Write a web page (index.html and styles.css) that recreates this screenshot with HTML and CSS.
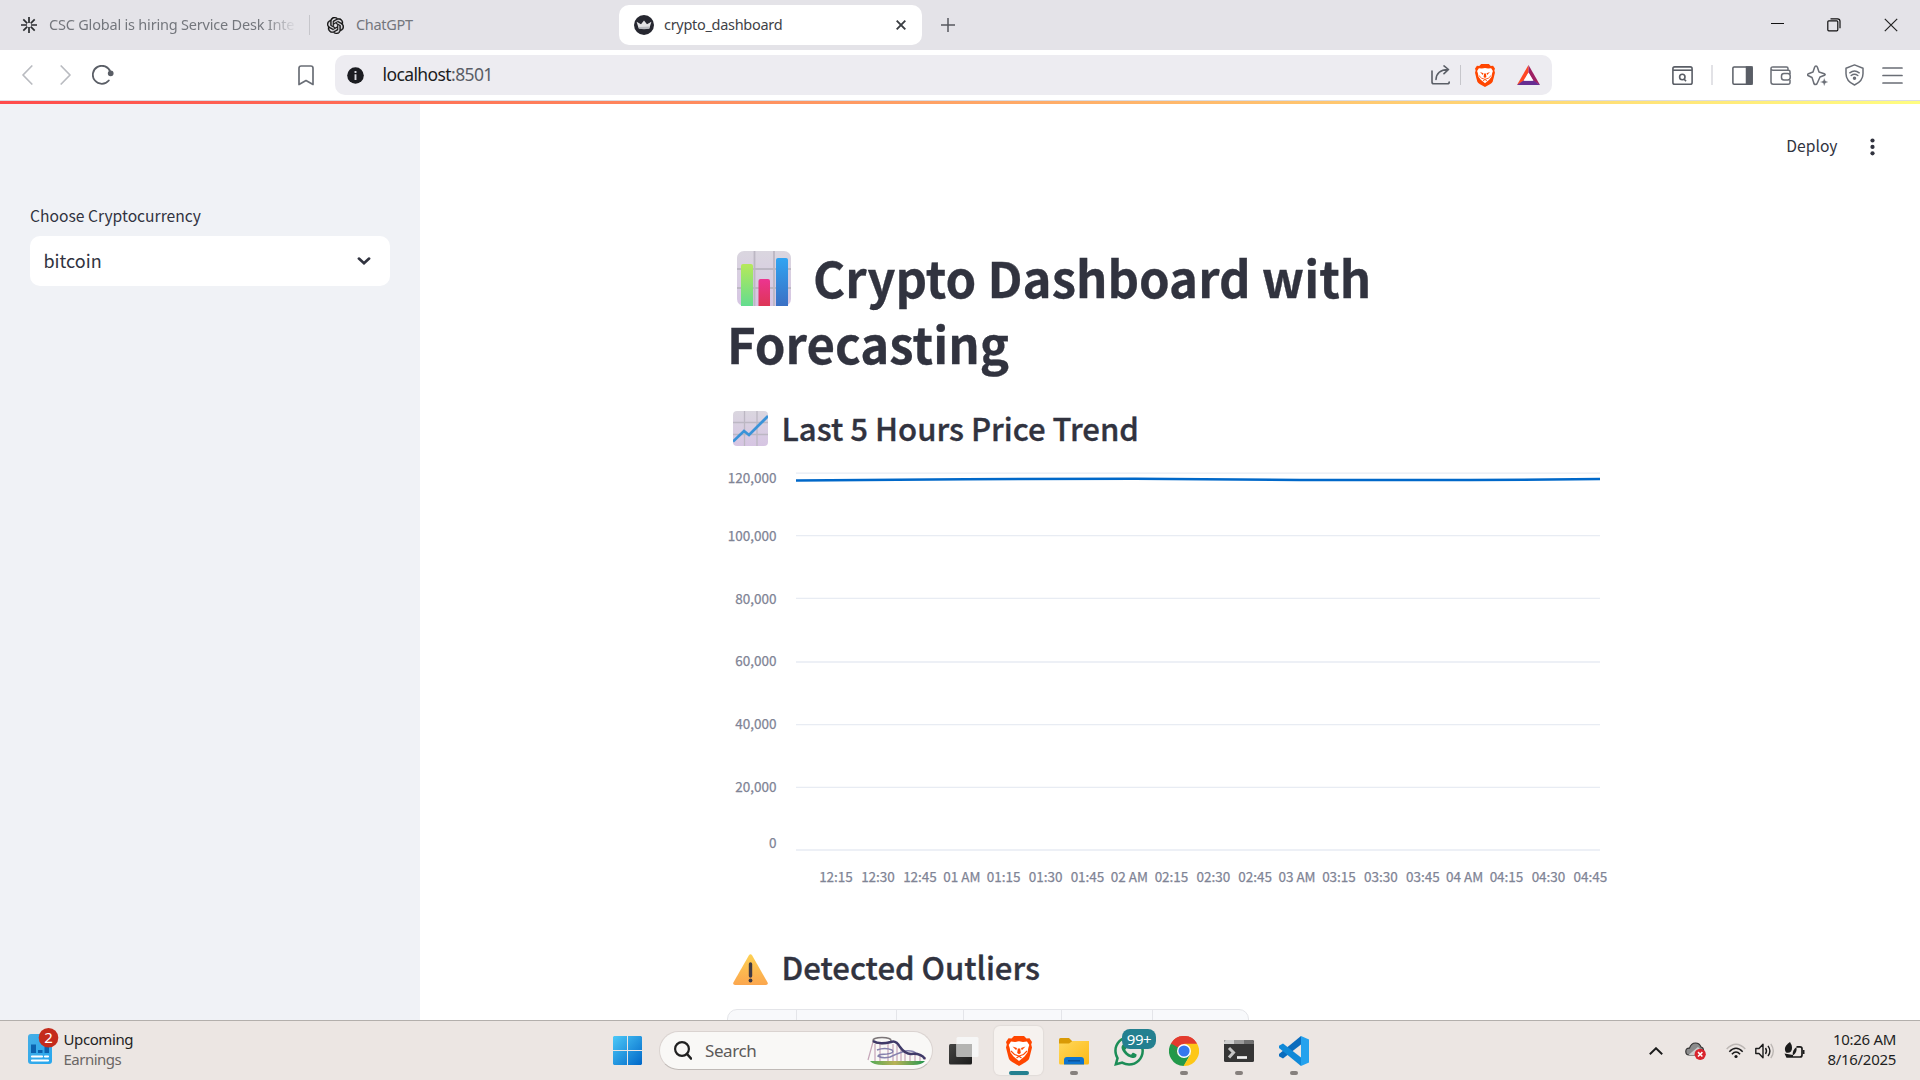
FILE: index.html
```html
<!DOCTYPE html>
<html lang="en">
<head>
<meta charset="utf-8">
<title>crypto_dashboard</title>
<link rel="stylesheet" href="styles.css">
</head>
<body>
<header class="tabs">
  <div class="tab tab-first">
    <svg class="ico" width="16" height="16" viewBox="0 0 16 16" stroke="#2b2d30" stroke-width="1.7"><path d="M8 0v6M8 10v6M0 8h6M10 8h6M2.3 2.3l4 4M9.7 9.7l4 4M13.7 2.3l-4 4M6.3 9.7l-4 4"/></svg>
    <span class="tab-text fade">CSC Global is hiring Service Desk Inte</span>
  </div>
  <div class="tab-sep"></div>
  <div class="tab tab-second">
    <svg class="ico" width="17" height="17" viewBox="0 0 24 24" fill="#111" stroke="#111" stroke-width=".5"><path d="M22.2819 9.8211a5.9847 5.9847 0 0 0-.5157-4.9108 6.0462 6.0462 0 0 0-6.5098-2.9A6.0651 6.0651 0 0 0 4.9807 4.1818a5.9847 5.9847 0 0 0-3.9977 2.9 6.0462 6.0462 0 0 0 .7427 7.0966 5.98 5.98 0 0 0 .511 4.9107 6.051 6.051 0 0 0 6.5146 2.9001A5.9847 5.9847 0 0 0 13.2599 24a6.0557 6.0557 0 0 0 5.7718-4.2058 5.9894 5.9894 0 0 0 3.9977-2.9001 6.0557 6.0557 0 0 0-.7475-7.0729zm-9.022 12.6081a4.4755 4.4755 0 0 1-2.8764-1.0408l.1419-.0804 4.7783-2.7582a.7948.7948 0 0 0 .3927-.6813v-6.7369l2.02 1.1686a.071.071 0 0 1 .038.052v5.5826a4.504 4.504 0 0 1-4.4945 4.4944zm-9.6607-4.1254a4.4708 4.4708 0 0 1-.5346-3.0137l.142.0852 4.783 2.7582a.7712.7712 0 0 0 .7806 0l5.8428-3.3685v2.3324a.0804.0804 0 0 1-.0332.0615L9.74 19.9502a4.4992 4.4992 0 0 1-6.1408-1.6464zM2.3408 7.8956a4.485 4.485 0 0 1 2.3655-1.9728V11.6a.7664.7664 0 0 0 .3879.6765l5.8144 3.3543-2.0201 1.1685a.0757.0757 0 0 1-.071 0l-4.8303-2.7865A4.504 4.504 0 0 1 2.3408 7.872zm16.5963 3.8558L13.1038 8.364 15.1192 7.2a.0757.0757 0 0 1 .071 0l4.8303 2.7913a4.4944 4.4944 0 0 1-.6765 8.1042v-5.6772a.79.79 0 0 0-.407-.667zm2.0107-3.0231l-.142-.0852-4.7735-2.7818a.7759.7759 0 0 0-.7854 0L9.409 9.2297V6.8974a.0662.0662 0 0 1 .0284-.0615l4.8303-2.7866a4.4992 4.4992 0 0 1 6.6802 4.66zM8.3065 12.863l-2.02-1.1638a.0804.0804 0 0 1-.038-.0567V6.0742a4.4992 4.4992 0 0 1 7.3757-3.4537l-.142.0805L8.704 5.459a.7948.7948 0 0 0-.3927.6813zm1.0976-2.3654l2.602-1.4998 2.6069 1.4998v2.9994l-2.5974 1.4997-2.6067-1.4997Z"/></svg>
    <span class="tab-text">ChatGPT</span>
  </div>
  <div class="tab tab-active">
    <svg class="ico" width="20" height="20" viewBox="0 0 20 20"><circle cx="10" cy="10" r="10" fill="#262730"/><path d="M2.6 6.8L7 9.2 10 5.4l3 3.8 4.400-2.400-2.100 6.600H4.700z" fill="#e4e4e6"/><path d="M4.900 12l10.800-.6-.5 2.300q-5.200.9-10 0z" fill="#b9bbc0"/></svg>
    <span class="tab-text">crypto_dashboard</span>
    <svg class="tab-close" width="10" height="10" viewBox="0 0 10 10" stroke="#3a3d42" stroke-width="1.900"><path d="M.7.7l8.600 8.600M9.300.7L.7 9.300"/></svg>
  </div>
  <svg class="new-tab" width="14" height="14" viewBox="0 0 14 14" stroke="#55585e" stroke-width="1.500"><path d="M7 0v14M0 7h14"/></svg>
  <div class="window-buttons">
    <svg width="13" height="14" viewBox="0 0 13 14" stroke="#111" shape-rendering="crispEdges"><path d="M0 5.500h13"/></svg>
    <svg width="14" height="14" viewBox="0 0 14 14" fill="none" stroke="#111" stroke-width="1.200"><rect x=".8" y="2.800" width="10" height="10" rx="1"/><path d="M3.500 .8h7q2.500 0 2.500 2.500v7"/></svg>
    <svg width="14" height="14" viewBox="0 0 14 14" stroke="#222" stroke-width="1.200"><path d="M.8.8l12.400 12.400M13.200.8L.8 13.200"/></svg>
  </div>
</header>

<nav class="toolbar">
  <svg class="t-back" width="11" height="20" viewBox="0 0 11 20" fill="none" stroke="#b9bbc0" stroke-width="1.700" stroke-linecap="round" stroke-linejoin="round"><path d="M9.800 1L1 10l8.800 9"/></svg>
  <svg class="t-fwd" width="11" height="20" viewBox="0 0 11 20" fill="none" stroke="#b9bbc0" stroke-width="1.700" stroke-linecap="round" stroke-linejoin="round"><path d="M1.200 1L10 10l-8.800 9"/></svg>
  <svg class="t-reload" width="22" height="20" viewBox="0 0 22 20" fill="none" stroke="#5a5e66" stroke-width="1.800" stroke-linecap="round"><path d="M16.800 15.500A9 9 0 1 1 18.400 7"/><circle cx="18.700" cy="8.300" r="2" fill="#5a5e66"/></svg>
  <svg class="t-mark" width="16" height="21" viewBox="0 0 16 21" fill="none" stroke="#6a6e76" stroke-width="1.700" stroke-linejoin="round"><path d="M1 3.200Q1 1 3.200 1h9.600Q15 1 15 3.200V19.500L8 15.500 1 19.500z"/></svg>
  <div class="address">
    <svg width="17" height="17" viewBox="0 0 17 17"><circle cx="8.500" cy="8.500" r="8.300" fill="#1b1c21"/><path d="M8.500 4v2M8.500 7.300V13" stroke="#d8d8de" stroke-width="1.900"/></svg>
    <span class="url">localhost<i>:8501</i></span>
    <svg class="a-share" width="19" height="20" viewBox="0 0 19 20" fill="none" stroke="#5a5e66" stroke-width="1.600" stroke-linecap="round" stroke-linejoin="round"><path d="M1 6v11q0 1.800 1.800 1.800H16.500q1.700 0 1.700-1.800M5 14.500Q5.500 5 17 4.500M13 .9l4.500 3.600L13 8.700"/></svg>
    <div class="a-sep"></div>
    <svg class="a-brave" width="20" height="23" viewBox="0 0 26 30"><use href="#lion"/></svg>
    <svg class="a-bat" width="23" height="20" viewBox="0 0 23 20"><path d="M11.500 0L0 20l7-4 4.500-8.500z" fill="#ff4724"/><path d="M11.500 0L23 20l-7-4-4.500-8.500z" fill="#9e1f63"/><path d="M0 20h23l-6.500-4.500h-10z" fill="#662d91"/><path d="M11.500 7.500l5 8.200h-10z" fill="#fff"/></svg>
  </div>
  <svg class="t-find" width="21" height="19" viewBox="0 0 21 19" fill="none" stroke="#5a5e66" stroke-width="1.600"><rect x=".9" y=".9" width="19.200" height="17.300" rx="1.800"/><path d="M1 4.200h19"/><circle cx="10.300" cy="11" r="2.700"/><path d="M12 13l2 2.300"/></svg>
  <div class="t-sep"></div>
  <svg class="t-panel" width="21" height="19" viewBox="0 0 21 19" fill="none" stroke="#5a5e66" stroke-width="1.500"><rect x=".9" y=".9" width="19.200" height="17.300" rx="1.200"/><path d="M14.500 1H20v17h-5.500z" fill="#5a5e66"/></svg>
  <svg class="t-wallet" width="21" height="19" viewBox="0 0 21 19" fill="none" stroke="#6a6e76" stroke-width="1.500"><path d="M20 8V5.800Q20 4.200 18.500 4.200H3Q1 4.200 1 2.500T3 .9h13.500q1.500 0 1.500 1.500v1.800M1 2.500v13.500q0 2.200 2.200 2.200h15Q20 18.200 20 16.500V14"/><rect x="11.500" y="7.500" width="8.700" height="6.500" rx="2.500"/></svg>
  <svg class="t-leo" width="21" height="21" viewBox="0 0 21 21" fill="none" stroke="#6a6e76" stroke-width="1.500" stroke-linejoin="round"><path d="M9 .9Q10 .9 10.500 2.500L12 7l5.300 1.700Q19 9.500 17.500 10.300L13 12l-2.200 5q-.8 2.600-2.300 2.600T6.500 17L5 12.500.9 10.500Q0 9.500 1.500 8.700L6 7 7.500 2.500Q8 .9 9 .9z"/><path d="M17.300 12.500l1.100 3.300 3.300 1.200-3.300 1.200-1.100 3.300-1.200-3.300-3.300-1.200 3.300-1.200z" fill="#6a6e76" stroke="#fff" stroke-width=".5"/></svg>
  <svg class="t-vpn" width="19" height="22" viewBox="0 0 19 22" fill="none" stroke="#6a6e76" stroke-width="1.500" stroke-linejoin="round" stroke-linecap="round"><path d="M9.500 .9L18 4.200v5.500Q18 17 9.500 21 1 17 1 9.700V4.200z"/><path d="M4.800 8.800q4.700-3.600 9.400 0M6.200 11.500q3.300-2.600 6.600 0"/><circle cx="9.500" cy="14.200" r="1" fill="#6a6e76"/></svg>
  <svg class="t-menu" width="21" height="17" viewBox="0 0 21 17" stroke="#6a6e76" stroke-width="1.700" stroke-linecap="round"><path d="M1 1h19M1 8.500h19M1 16h19"/></svg>
</nav>

<div class="app">
  <div class="rainbow"></div>
  <div class="app-body">
    <aside class="sidebar">
      <label class="side-label">Choose Cryptocurrency</label>
      <div class="select">
        <span>bitcoin</span>
        <svg class="chevron" width="14" height="8" viewBox="0 0 14 8" fill="none" stroke="#31333f" stroke-width="2.700" stroke-linecap="round"><path d="M1.900 1.600L7 6.200l5.100-4.600"/></svg>
      </div>
    </aside>
    <main class="main">
      <div class="app-header">
        <span>Deploy</span>
        <svg width="5" height="18" viewBox="0 0 5 18" fill="#31333f"><circle cx="2.500" cy="2.500" r="2.100"/><circle cx="2.500" cy="8.900" r="2.100"/><circle cx="2.500" cy="15.300" r="2.100"/></svg>
      </div>
      <div class="content">
        <h1><svg class="h1-icon" width="54" height="55" viewBox="0 0 54 55"><defs><linearGradient id="paper" x1="0" y1="0" x2="0" y2="1"><stop offset="0" stop-color="#dad6df"/><stop offset="1" stop-color="#d6c5e3"/></linearGradient><linearGradient id="green" x1="0" y1="0" x2="0" y2="1"><stop offset="0" stop-color="#b6e95a"/><stop offset="1" stop-color="#63dc8f"/></linearGradient><linearGradient id="red" x1="0" y1="0" x2="0" y2="1"><stop offset="0" stop-color="#ec3490"/><stop offset="1" stop-color="#dd3656"/></linearGradient><linearGradient id="blue" x1="0" y1="0" x2="0" y2="1"><stop offset="0" stop-color="#30a4f2"/><stop offset="1" stop-color="#3b70c4"/></linearGradient></defs><rect width="54" height="55" rx="7" fill="url(#paper)"/><path d="M17.500 0v55M37 0v55M0 18h54M0 37h54" stroke="#bcb7c3" stroke-width="1.800"/><path d="M4 55V15q0-2 2-2h8q2 0 2 2v40z" fill="url(#green)"/><path d="M21.500 55V30q0-2 2-2h7.500q2 0 2 2v25z" fill="url(#red)"/><path d="M39 55V9q0-2 2-2h8q2 0 2 2v46z" fill="url(#blue)"/></svg>Crypto Dashboard with Forecasting</h1>
        <h3><svg class="h3-icon" width="35" height="35" viewBox="0 0 35 35"><rect width="35" height="35" rx="4" fill="url(#paper)"/><path d="M11.500 0v35M24 0v35M0 11.500h35M0 23.500h35" stroke="#bcb7c3" stroke-width="1.300"/><path d="M0 30.500l11-10.500 5 4L35 5" fill="none" stroke="#3a93d8" stroke-width="2.700"/></svg>Last 5 Hours Price Trend</h3>
        <svg class="chart" width="893" height="430" viewBox="727 463 893 430">
          <g class="grid"><path d="M796 473.200h804M796 535.700h804M796 598.400h804M796 662h804M796 724.600h804M796 787.300h804M796 850h804"/></g>
          <path class="series" d="M796 480.600L965 479.300 1135 478.700 1300 480 1470 480.100 1600 479"/>
          <g class="y-labels">
            <text x="776.500" y="483">120,000</text><text x="776.500" y="541">100,000</text><text x="776.500" y="604">80,000</text><text x="776.500" y="666">60,000</text><text x="776.500" y="729">40,000</text><text x="776.500" y="792">20,000</text><text x="776.500" y="848">0</text>
          </g>
          <g class="x-labels">
            <text x="836" y="882">12:15</text><text x="878" y="882">12:30</text><text x="920" y="882">12:45</text><text x="961.800" y="882">01 AM</text><text x="1003.700" y="882">01:15</text><text x="1045.600" y="882">01:30</text><text x="1087.500" y="882">01:45</text><text x="1129.300" y="882">02 AM</text><text x="1171.500" y="882">02:15</text><text x="1213.300" y="882">02:30</text><text x="1255.200" y="882">02:45</text><text x="1297" y="882">03 AM</text><text x="1339" y="882">03:15</text><text x="1380.900" y="882">03:30</text><text x="1422.800" y="882">03:45</text><text x="1464.700" y="882">04 AM</text><text x="1506.500" y="882">04:15</text><text x="1548.500" y="882">04:30</text><text x="1590.400" y="882">04:45</text>
          </g>
        </svg>
        <h3 class="outliers"><svg class="h3-icon" width="35" height="31" viewBox="0 0 35 31"><defs><linearGradient id="amber" x1="0" y1="0" x2="0" y2="1"><stop offset="0" stop-color="#fdd052"/><stop offset="1" stop-color="#fba64e"/></linearGradient></defs><path d="M15.800 1.500q1.700-2.500 3.400 0L34.600 28.500Q35.300 31 33 31H2Q-.3 31 .4 28.500z" fill="url(#amber)"/><path d="M17.500 10v12" stroke="#3f3a44" stroke-width="3.400" stroke-linecap="round"/><circle cx="17.500" cy="26.500" r="1.900" fill="#3f3a44"/></svg>Detected Outliers</h3>
        <div class="table"><i></i><i></i><i></i><i></i><i></i><i></i></div>
      </div>
    </main>
  </div>
</div>

<footer class="taskbar">
  <div class="widget">
    <svg class="widget-icon" width="31" height="37" viewBox="0 0 31 37"><defs><linearGradient id="wg" x1="0" y1="0" x2="1" y2="1"><stop offset="0" stop-color="#45aee6"/><stop offset="1" stop-color="#27a7ee"/></linearGradient></defs><rect x="0" y="6" width="24" height="30" rx="3" fill="url(#wg)"/><path d="M3 16.500h5v8.500H3zM10 22h4.500v3H10zM16.500 19h4.500v6h-4.500z" fill="#0c62ae"/><path d="M4 28.500h10M17 28.500h3M4 32.500h16" stroke="#fff" stroke-width="2.200" stroke-linecap="round"/><circle cx="20.500" cy="9.800" r="9.800" fill="#c42b1c"/><text x="20.500" y="15" class="badge-num">2</text></svg>
    <div class="widget-text"><span>Upcoming</span><small>Earnings</small></div>
  </div>
  <div class="dock">
    <div class="start"><svg width="29" height="29" viewBox="0 0 29 29"><defs><linearGradient id="win" x1="0" y1="0" x2="1" y2="1"><stop offset="0" stop-color="#4cc9f8"/><stop offset="1" stop-color="#0067c8"/></linearGradient></defs><path d="M1 0h13v14H0V1zM15 0h13l1 1v13H15zM0 15h14v14H1l-1-1zM15 15h14v13l-1 1H15z" fill="url(#win)"/></svg></div>
    <div class="search">
      <svg width="18" height="19" viewBox="0 0 18 19" fill="none" stroke="#202020" stroke-width="2.200" stroke-linecap="round"><circle cx="8" cy="8" r="6.900"/><path d="M13 13l4 4.500" stroke-width="2.600"/></svg>
      <span>Search</span>
      <svg class="coaster" width="60" height="30" viewBox="0 0 60 30" fill="none"><defs><linearGradient id="grass" x1="0" y1="0" x2="1" y2="0"><stop offset="0" stop-color="#52a956"/><stop offset=".45" stop-color="#b9b255"/><stop offset="1" stop-color="#23964f"/></linearGradient></defs><path d="M3 25h55q-3 4-12 4H16Q6 29 3 25z" fill="url(#grass)"/><path d="M6 6L1 24M8 8v17M13 7v18M21 7v18M26 8v17M30 9v16M34 13v12M38 17v8M43 19v6M48 18v7M53 20v5M58 21v3" stroke="#c5a5b8" stroke-width="1.200"/><path d="M10 14q8-3 15 0 3 3-5 4-8 0-9 2 5 3 12 1 6-3 15-6 8-1 12 3" stroke="#8581ad" stroke-width="1.500"/><ellipse cx="15" cy="4.500" rx="9" ry="3" stroke="#7c7678" stroke-width="1.500"/><path d="M6 5q6 4 18 1 5-2 9 5 5 7 11 7 10-1 14 5" stroke="#403a68" stroke-width="2.500"/></svg>
    </div>
    <div class="cell view"><svg width="30" height="29" viewBox="0 0 30 29"><defs><linearGradient id="dk" x1="0" y1="0" x2="1" y2="1"><stop offset="0" stop-color="#454543"/><stop offset="1" stop-color="#1c1c1c"/></linearGradient></defs><rect y="8" width="23" height="20.500" rx="1.500" fill="url(#dk)"/><rect x="7.500" y="1" width="22" height="20" rx="1.500" fill="#f6f6f6"/><path d="M7.500 8H23v13H7.500z" fill="#b4b4b2"/></svg></div>
    <div class="cell active"><svg width="26" height="30" viewBox="0 0 26 30"><defs><g id="lion"><path d="M8 0h10l2.500 2.500L23.500 2.200 26 6l-.8 2.500.8 3c-1 4-2 8.300-3 11.500-1 2-5 4-10 7-5-3-9-5-10-7-1-3.200-2-7.500-3-11.500l.8-3L0 6l2.500-3.800 3 .3z" fill="#ff4600"/><path d="M5 5.500l4 .5 4-.8 4 .8 4-.5L23.300 9l-1 3-.8 4.500-3 4-5.500 4.500-5.500-4.500-3-4-.8-4.500-1-3z" fill="#fff"/><path d="M6.500 10.500l4.500 1.500-.8 2.200zM19.500 10.500L15 12l.8 2.200zM11.800 12.500h2.400l.6 4.500-1.800 1.200-1.800-1.200z" fill="#ff4600"/><path d="M5 15l3.500 3.500L13 20l4.500-1.500L21 15M10.500 22l2.500-1.800 2.500 1.800" fill="none" stroke="#ff4600" stroke-width="1.100"/></g></defs><use href="#lion"/></svg><b></b></div>
    <div class="cell"><svg width="30" height="30" viewBox="0 0 30 30"><defs><linearGradient id="fd" x1="0" y1="0" x2="1" y2="1"><stop offset="0" stop-color="#ffd85c"/><stop offset="1" stop-color="#fdb914"/></linearGradient></defs><path d="M0 3.500Q0 2 1.500 2H10l3.500 3.500L11 9H0z" fill="#d99a06"/><path d="M0 7.500h10L13.500 5H30v22q0 1.500-1.500 1.500h-27Q0 28.500 0 27z" fill="url(#fd)"/><path d="M5 28.500v-4.500q0-3 3-3h14q3 0 3 3v4.500z" fill="#0e74cf"/><path d="M9 24.800h12" stroke="#0a4d93" stroke-width="1.300"/></svg><b></b></div>
    <div class="cell whats"><svg width="30" height="30" viewBox="0 0 24 24" fill="#1c8d57"><path d="M17.472 14.382c-.297-.149-1.758-.867-2.030-.967-.273-.099-.471-.148-.67.15-.197.297-.767.966-.94 1.164-.173.199-.347.223-.644.075-.297-.15-1.255-.463-2.390-1.475-.883-.788-1.480-1.761-1.653-2.059-.173-.297-.018-.458.13-.606.134-.133.298-.347.446-.52.149-.174.198-.298.298-.497.099-.198.05-.371-.025-.52-.075-.149-.669-1.612-.916-2.207-.242-.579-.487-.5-.669-.51-.173-.008-.371-.01-.57-.01-.198 0-.52.074-.792.372-.272.297-1.040 1.016-1.040 2.479 0 1.462 1.065 2.875 1.213 3.074.149.198 2.096 3.200 5.077 4.487.709.306 1.262.489 1.694.625.712.227 1.360.195 1.871.118.571-.085 1.758-.719 2.006-1.413.248-.694.248-1.289.173-1.413-.074-.124-.272-.198-.57-.347m-5.421 7.403h-.004a9.870 9.870 0 01-5.031-1.378l-.361-.214-3.741.982.998-3.648-.235-.374a9.860 9.860 0 01-1.510-5.260c.001-5.450 4.436-9.884 9.888-9.884 2.640 0 5.122 1.030 6.988 2.898a9.825 9.825 0 012.893 6.994c-.003 5.450-4.437 9.884-9.885 9.884m8.413-18.297A11.815 11.815 0 0012.050 0C5.495 0 .16 5.335.157 11.892c0 2.096.547 4.142 1.588 5.945L.057 24l6.305-1.654a11.882 11.882 0 005.683 1.448h.005c6.554 0 11.890-5.335 11.893-11.893a11.821 11.821 0 00-3.480-8.413Z"/></svg><em>99+</em></div>
    <div class="cell"><svg width="30" height="30" viewBox="0 0 30 30"><path d="M15 15L2 7.500A15 15 0 0 1 28 7.500z" fill="#e33b2e"/><path d="M2 7.500A15 15 0 0 0 15 30l6.200-11.500L15 15z" fill="#22994a"/><path d="M28 7.500A15 15 0 0 1 14.500 30L21.500 18.500 15 7.500z" fill="#fdc716"/><path d="M2 7.500A15 15 0 0 1 28 7.500H15L8.500 18.800z" fill="#e33b2e"/><path d="M2 7.500L8.500 18.800 15 15z" fill="#22994a"/><circle cx="15" cy="15" r="7" fill="#fff"/><circle cx="15" cy="15" r="5.600" fill="#3478ee"/></svg><b></b></div>
    <div class="cell"><svg width="30" height="22" viewBox="0 0 30 22"><rect width="30" height="22" rx="1.500" fill="#353535"/><path d="M1.500 0H10v4H0V1.500z" fill="#cfcfcf"/><path d="M10 0h10v4H10z" fill="#9a9a9a"/><path d="M20 0h8.500L30 1.500V4H20z" fill="#707070"/><path d="M5 8l4.500 4.500L5 17.500" fill="none" stroke="#c4c4c4" stroke-width="3"/><path d="M13 17.500h10" stroke="#f2f2f2" stroke-width="2.700"/></svg><b></b></div>
    <div class="cell"><svg width="30" height="30" viewBox="0 0 30 30"><path d="M22 0L30 3.500v23L22 30z" fill="#25a2ee"/><path d="M22 0v8.500L4 22.500 0 20.200v-2.200z" fill="#0a6cbd"/><path d="M22 30v-8.500L4 7.500 0 9.800V12z" fill="#1089d8"/></svg><b></b></div>
  </div>
  <div class="tray">
    <svg width="14" height="8" viewBox="0 0 14 8" fill="none" stroke="#1b1b1b" stroke-width="1.900"><path d="M.8 7.200L7 1.200l6.200 6"/></svg>
    <svg class="y-cloud" width="21" height="18" viewBox="0 0 21 18"><path d="M4 13Q.8 13 .8 9.500T4.500 6.200Q6 1 10.500 1q4 0 5.500 4 2.500.5 2.500 3.500 0 4.500-4 4.500z" fill="#8b8b8b" stroke="#333" stroke-width="1.200"/><path d="M4 12.500L13 5l4 4-3 4H4z" fill="#cdcdcd"/><circle cx="15.200" cy="12.300" r="5.600" fill="#d9242d"/><path d="M13 10.100l4.400 4.400M17.400 10.100L13 14.500" stroke="#fff" stroke-width="1.500"/></svg>
    <svg class="y-wifi" width="20" height="16" viewBox="0 0 20 16" fill="none" stroke="#1b1b1b" stroke-width="1.500"><path d="M.7 6Q10-3.500 19.300 6" stroke="#bcb7b4"/><path d="M3.300 8.700q6.700-7 13.400 0M5.900 11.300q4.100-4.400 8.200 0"/><circle cx="10" cy="13.500" r="1.600" fill="#1b1b1b" stroke="none"/></svg>
    <svg class="y-vol" width="20" height="16" viewBox="0 0 20 16" fill="none" stroke="#1b1b1b" stroke-width="1.400" stroke-linejoin="round"><path d="M.8 5.500H4L8 1.200v13.600L4 10.500H.8z"/><path d="M10.500 5q2 3 0 6M13 2.800q3.800 5.200 0 10.400"/><path d="M15.800.8q5 7.200 0 14.400" stroke="#bcb7b4"/></svg>
    <svg class="y-bat" width="21" height="17" viewBox="0 0 21 17"><path d="M12.500 4.800H16q2 0 2 2v6.200q0 2-2 2H9" fill="none" stroke="#1b1b1b" stroke-width="1.700"/><path d="M18.800 8h1.700v4h-1.700z" fill="#1b1b1b"/><path d="M6 0Q9.500 5 7 9.500q-2 2-5 1Q-1.500 5 6 0z" fill="#1b1b1b"/><path d="M.5 11.500L9 13v2.800H2.500z" fill="#1b1b1b"/><path d="M12.500 5Q8 8 8.800 13.500q4.500-2.500 3.700-8.500z" fill="#1b1b1b"/></svg>
    <div class="clock"><span>10:26 AM</span><span>8/16/2025</span></div>
  </div>
</footer>
</body>
</html>
```
FILE: styles.css
```css
* { box-sizing: border-box; }
body {
  margin: 0; width: 1920px; height: 1080px; overflow: hidden;
  display: flex; flex-direction: column; background: #fff;
  font-family: "Noto Sans", "Open Sans", sans-serif;
}
svg { display: block; flex: none; }
i, em { font-style: normal; }

/* Tab strip */
.tabs { height: 50px; background: #e4e3e8; display: flex; align-items: center; flex: none; }
.tab { display: flex; align-items: center; height: 40px; flex: none; }
.tab-first { width: 309px; padding-left: 21px; gap: 12px; }
.tab-second { width: 309px; padding-left: 17px; gap: 12px; }
.tab-sep { width: 1px; height: 20px; background: #c6c6cb; }
.tab-text { font-size: 14.5px; letter-spacing: -0.3px; color: #74777d; white-space: nowrap; line-height: 20px; padding-bottom: 2px; }
.fade { width: 246px; overflow: hidden; letter-spacing: -0.2px; -webkit-mask-image: linear-gradient(90deg, #000 215px, transparent 248px); mask-image: linear-gradient(90deg, #000 215px, transparent 248px); }
.tab-active { width: 303px; background: #fff; border-radius: 10px; padding: 0 16px 0 15px; gap: 10px; }
.tab-active .tab-text { color: #3f4247; }
.tab-close { margin-left: auto; }
.new-tab { margin-left: 19px; }
.window-buttons { margin-left: auto; display: flex; align-items: center; gap: 43px; padding-right: 22px; }

/* Toolbar */
.toolbar { height: 50px; background: #fff; display: flex; align-items: center; flex: none; padding-left: 22px; }
.t-fwd { margin-left: 27px; }
.t-reload { margin-left: 21px; }
.t-mark { margin-left: 184px; }
.address { margin-left: 21px; width: 1217px; height: 40px; background: #edecf1; border-radius: 10px; display: flex; align-items: center; padding-left: 11.5px; }
.url { margin-left: 19px; font-size: 17.5px; letter-spacing: -0.6px; color: #1b1c21; line-height: 24px; padding-bottom: 2px; }
.url i { color: #5a5d66; }
.a-share { margin-left: auto; }
.a-sep { width: 1px; height: 20px; background: #c6c6cb; margin-left: 10px; }
.a-brave { margin-left: 14px; }
.a-bat { margin: 0 12px 0 22px; }
.t-find { margin-left: 120px; }
.t-sep { width: 2px; height: 20px; background: #e2e2e6; margin-left: 18px; }
.t-panel { margin-left: 19px; }
.t-wallet { margin-left: 17px; }
.t-leo { margin-left: 16px; }
.t-vpn { margin-left: 17px; }
.t-menu { margin-left: 18px; }

/* Dashboard page */
.app { height: 920px; border-top: 1px solid #dcdde3; display: flex; flex-direction: column; overflow: hidden; flex: none; font-family: "Noto Sans CJK JP", "Noto Sans CJK SC", sans-serif; color: #31333f; }
.rainbow { height: 3px; background: linear-gradient(90deg, #ff4b4b, #fffd80); flex: none; }
.app-body { display: flex; flex: 1; min-height: 0; }
.sidebar { width: 420px; background: #f0f2f6; padding: 99px 30px 0; flex: none; }
.side-label { display: block; font-size: 15.65px; line-height: 26px; }
.select { margin-top: 7px; height: 50px; background: #fff; border-radius: 10px; padding: 0 19px 2px 13.5px; display: flex; align-items: center; justify-content: space-between; font-size: 18px; }
.chevron { margin-top: 2px; }
.main { flex: 1; min-width: 0; }
.app-header { height: 85px; display: flex; justify-content: flex-end; align-items: center; gap: 32.5px; padding-right: 45px; font-size: 15.65px; }
.app-header span { padding-bottom: 2px; }
.content { margin-left: 307px; padding-top: 55px; width: 893px; }
h1 { margin: 0; font-size: 49.15px; line-height: 66px; font-weight: 700; height: 132px; width: 700px; -webkit-text-stroke: 0.3px #31333f; }
.h1-icon { display: inline-block; vertical-align: -8px; margin: 0 22px 0 10px; }
h3 { margin: 31px 0 0; font-size: 31.1px; line-height: 42px; height: 42px; font-weight: 500; white-space: nowrap; -webkit-text-stroke: 0.35px #31333f; }
.h3-icon { display: inline-block; vertical-align: -5px; margin: 0 13.5px 0 6px; }
.chart { margin-top: 14px; }
.grid { stroke: #e8ecf3; stroke-width: 1.3; }
.series { fill: none; stroke: #0068c9; stroke-width: 2.5; }
.y-labels, .x-labels { font-size: 13.5px; fill: #808495; stroke: #808495; stroke-width: 0.25px; }
.y-labels { text-anchor: end; }
.x-labels { text-anchor: middle; }
.outliers { margin-top: 53px; }
.table { margin-top: 21px; width: 522px; height: 60px; background: #f8f9fb; border: 1px solid #e4e5e9; border-radius: 10px; display: grid; grid-template-columns: 68px 100px 67px 98px 91px 1fr; }
.table i + i { border-left: 1px solid #e4e5e9; }

/* Taskbar */
.taskbar { height: 60px; background: #ece6e3; border-top: 1px solid #b3afac; display: flex; align-items: center; justify-content: space-between; }
.widget { width: 600px; padding-left: 28px; display: flex; align-items: center; gap: 4.5px; }
.widget-icon { margin-bottom: 8px; }
.widget-text { display: flex; flex-direction: column; font-size: 15px; line-height: 20px; letter-spacing: -0.4px; color: #1f1f1f; padding-bottom: 4px; }
.widget-text small { font-size: 15px; color: #6a6765; letter-spacing: -0.5px; }
.badge-num { font-size: 15px; fill: #fff; text-anchor: middle; }
.dock { display: flex; align-items: center; flex: 1; }
.start { padding: 0 17px 0 13px; }
.search { width: 274px; height: 39px; border-radius: 20px; background: #f9f8f6; border: 1px solid #dad3d0; border-bottom-color: #c0bab7; display: flex; align-items: center; padding: 0 5px 0 14px; font-size: 17px; letter-spacing: -0.4px; color: #5c5a59; gap: 13px; }
.coaster { margin-left: auto; }
.cell { width: 49px; height: 49px; margin-right: 6px; display: flex; align-items: center; justify-content: center; position: relative; flex: none; }
.view { margin-left: 6px; }
.active { background: #f6f2ef; border-radius: 6px; box-shadow: 0 0 1px 1px #e2dcd9; }
.cell b { position: absolute; bottom: 0; width: 8px; height: 4px; border-radius: 2px; background: #86807d; }
.active b { width: 20px; background: #248090; }
.whats em { position: absolute; left: 18px; top: 3px; width: 34px; height: 20px; border-radius: 8px; background: #248090; color: #fff; font-size: 15px; line-height: 20px; text-align: center; letter-spacing: -0.4px; }
.tray { display: flex; align-items: center; padding-right: 24px; }
.y-cloud { margin-left: 22px; }
.y-wifi { margin-left: 20px; }
.y-vol { margin-left: 9px; }
.y-bat { margin-left: 9px; }
.clock { display: flex; flex-direction: column; align-items: flex-end; font-size: 15px; line-height: 20px; letter-spacing: -0.3px; color: #1f1f1f; width: 91px; padding-bottom: 4px; }
```
